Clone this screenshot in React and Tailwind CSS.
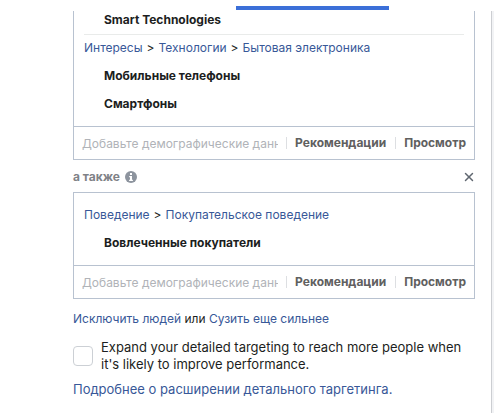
import { X } from 'lucide-react'

const Crumbs = ({ path }) => (
  <nav className="flex h-7 items-center gap-1 px-[10px]">
    {path.map((name, i) => (
      <span key={name} className="flex gap-1 whitespace-nowrap">
        {i > 0 && <span>&gt;</span>}
        <a href="#" className="text-[#385898]">{name}</a>
      </span>
    ))}
  </nav>
)

const Item = ({ children }) => (
  <div className="flex h-7 items-center pl-[30px] font-bold">{children}</div>
)

const SearchRow = () => (
  <div className="flex h-[33px] items-center border-t border-[#b8c2d0] px-2 font-bold text-[#606060]">
    <input
      type="text"
      aria-label="Детальный таргетинг"
      placeholder="Добавьте демографические данные, интересы или модели поведения"
      className="h-6 w-0 min-w-0 flex-1 font-normal outline-none placeholder:text-[#b0b3b8]"
    />
    <button type="button" className="ml-2 border-l border-[#dddfe2] px-2 leading-3">Рекомендации</button>
    <button type="button" className="ml-px border-l border-[#dddfe2] pl-2 leading-3">Просмотр</button>
  </div>
)

const InfoIcon = () => (
  <svg viewBox="0 0 12 12" className="size-3">
    <circle cx="6" cy="6" r="6" fill="#8d949e" />
    <path d="M5 2h2v2H5zM4.2 5H7v3.8h.9V10H4.1V8.800H5V6.200h-.8z" fill="#fff" />
  </svg>
)

export default function App() {
  return (
    <div className="flex min-h-screen flex-col bg-white font-['Inter','Noto_Sans',sans-serif] text-[12px] leading-4 text-[#1c1e21]">
      <header className="flex h-[11px] pt-[6px] pl-[236px]">
        <div className="h-1 w-[153px] bg-[#3b6fd8]" />
      </header>

      <div className="flex flex-1">
        <main className="min-w-0 flex-1 pr-4 pl-[73px]">
          <section className="border border-t-0 border-[#b8c2d0]">
            <div className="mx-[10px] h-6 border-b border-[#e9ebea] pl-5 leading-[18px] font-bold">Smart Technologies</div>
            <div className="-mt-px pb-2">
              <Crumbs path={['Интересы', 'Технологии', 'Бытовая электроника']} />
              <Item>Мобильные телефоны</Item>
              <Item>Смартфоны</Item>
            </div>
            <SearchRow />
          </section>

          <div className="flex h-8 items-center pt-0.5">
            <span className="font-bold text-[#7f8287]">а также</span>
            <button type="button" aria-label="Справка" className="ml-[5px]"><InfoIcon /></button>
            <button type="button" aria-label="Удалить" className="-mr-px ml-auto text-[#606770]"><X size={14} strokeWidth={2.5} /></button>
          </div>

          <section className="border border-[#b8c2d0] pt-2">
            <div className="pb-2">
              <Crumbs path={['Поведение', 'Покупательское поведение']} />
              <Item>Вовлеченные покупатели</Item>
            </div>
            <SearchRow />
          </section>

          <p className="mt-3">
            <a href="#" className="text-[#385898]">Исключить людей</a> или{' '}
            <a href="#" className="text-[#385898]">Сузить еще сильнее</a>
          </p>

          <label className="mt-3 flex items-center gap-2 text-[13px] leading-[17px]">
            <input type="checkbox" className="size-5 shrink-0 appearance-none rounded-sm border border-[#ccd0d5] bg-white" />
            <span>Expand your detailed targeting to reach more people when it's likely to improve performance.</span>
          </label>
          <a href="#" className="mt-2 block text-[13px] text-[#385898]">Подробнее о расширении детального таргетинга.</a>
        </main>
        <div className="w-[3px] border-l border-[#ccced2] bg-[#f2f3f5]" />
      </div>
    </div>
  )
}
